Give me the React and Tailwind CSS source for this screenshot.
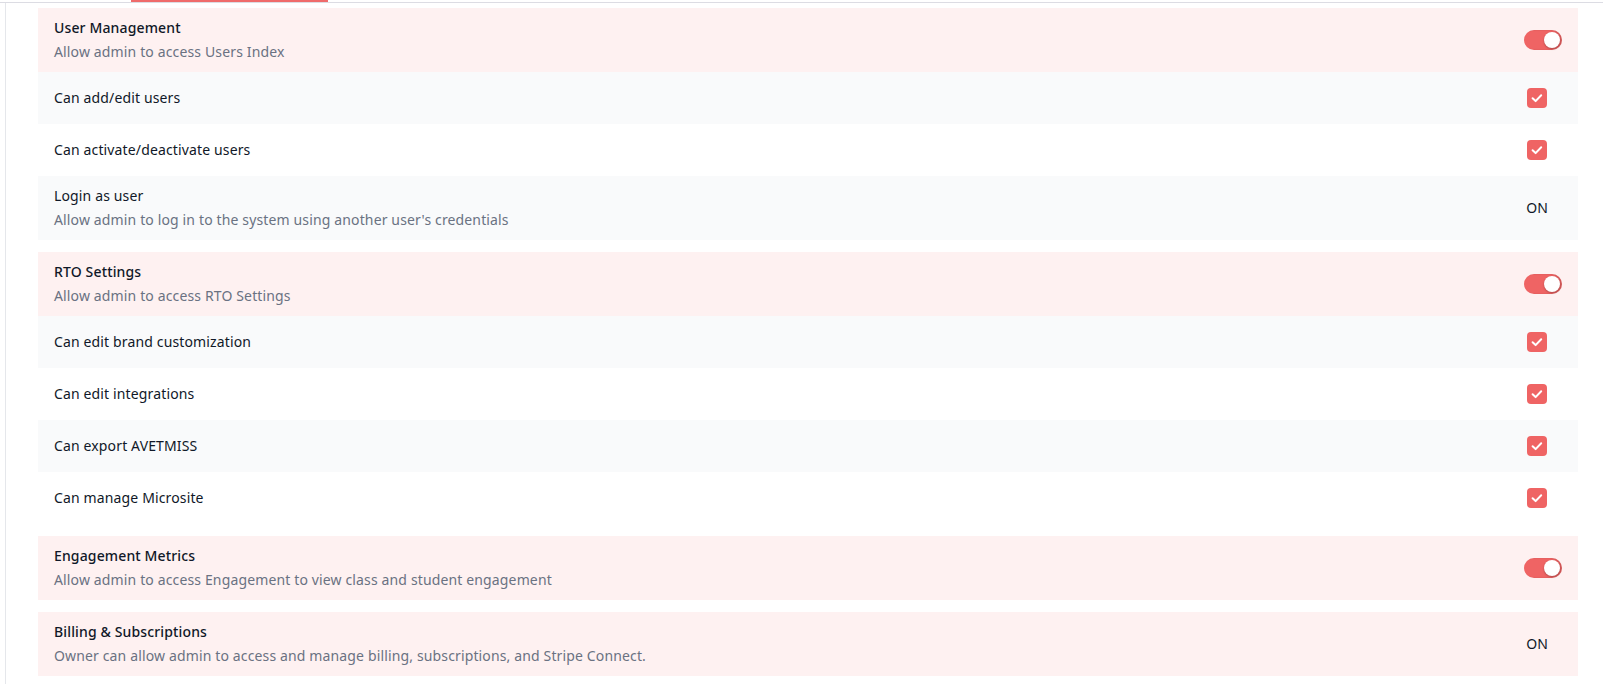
import React, { useState } from 'react';

const groups = [
  {
    title: 'User Management',
    desc: 'Allow admin to access Users Index',
    control: 'toggle',
    items: [
      { title: 'Can add/edit users', control: 'check' },
      { title: 'Can activate/deactivate users', control: 'check' },
      {
        title: 'Login as user',
        desc: "Allow admin to log in to the system using another user's credentials",
        control: 'on',
      },
    ],
  },
  {
    title: 'RTO Settings',
    desc: 'Allow admin to access RTO Settings',
    control: 'toggle',
    items: [
      { title: 'Can edit brand customization', control: 'check' },
      { title: 'Can edit integrations', control: 'check' },
      { title: 'Can export AVETMISS', control: 'check' },
      { title: 'Can manage Microsite', control: 'check' },
    ],
  },
  {
    title: 'Engagement Metrics',
    desc: 'Allow admin to access Engagement to view class and student engagement',
    control: 'toggle',
    items: [],
  },
  {
    title: 'Billing & Subscriptions',
    desc: 'Owner can allow admin to access and manage billing, subscriptions, and Stripe Connect.',
    control: 'on',
    items: [],
  },
];

function Toggle() {
  const [on, setOn] = useState(true);
  return (
    <button
      onClick={() => setOn((v) => !v)}
      className={`flex items-center w-[38px] h-5 rounded-full px-[2px] shadow-[inset_-2px_0_2px_rgba(0,0,0,0.12)] ${
        on ? 'bg-[#ef6464] justify-end' : 'bg-gray-300 justify-start'
      }`}
    >
      <span className="block h-4 w-4 rounded-full bg-white shadow-[0_1px_2px_rgba(0,0,0,0.25)]" />
    </button>
  );
}

function Check() {
  const [on, setOn] = useState(true);
  return (
    <button
      onClick={() => setOn((v) => !v)}
      className={`mr-[15px] flex h-5 w-5 items-center justify-center rounded-[4px] ${
        on ? 'bg-[#ef6464]' : 'bg-white border border-gray-300'
      }`}
    >
      {on && (
        <svg width="20" height="20" viewBox="0 0 20 20" fill="none">
          <path
            d="M5.6 10.3l3 2.8 5.6-5.9"
            stroke="white"
            strokeWidth="2"
            strokeLinecap="round"
            strokeLinejoin="round"
          />
        </svg>
      )}
    </button>
  );
}

function Control({ type }) {
  if (type === 'toggle') return <Toggle />;
  if (type === 'check') return <Check />;
  return <span className="mr-[14px] text-sm text-gray-900">ON</span>;
}

function Row({ title, desc, control, header, bg }) {
  return (
    <div className={`flex items-center justify-between pl-4 pr-4 ${bg} ${desc ? 'h-16' : 'h-[52px]'}`}>
      <div className="flex flex-col">
        <span className={`text-sm leading-6 text-gray-900 ${header ? 'font-medium' : ''}`}>{title}</span>
        {desc && <span className="text-sm leading-6 text-gray-500">{desc}</span>}
      </div>
      <Control type={control} />
    </div>
  );
}

export default function App() {
  return (
    <div className="min-h-[684px] bg-white font-['Noto_Sans',sans-serif] tracking-[0.14px]">
      {/* Tab bar (scrolled) */}
      <div className="border-b border-[#dcdce3]">
        <div className="ml-[131px] h-[2px] w-[197px] bg-[#ef6b6b]" />
      </div>

      <div className="ml-[5px] min-h-[681px] border-l border-[#e5e7eb] pl-8 pr-[25px] pt-[5px]">
        <div className="flex flex-col gap-3">
          {groups.map((g) => (
            <div key={g.title} className="flex flex-col">
              <Row title={g.title} desc={g.desc} control={g.control} header bg="bg-[#fef1f1]" />
              {g.items.map((it, i) => (
                <Row
                  key={it.title}
                  title={it.title}
                  desc={it.desc}
                  control={it.control}
                  bg={i % 2 === 0 ? 'bg-[#f9fafb]' : 'bg-white'}
                />
              ))}
            </div>
          ))}
        </div>
      </div>
    </div>
  );
}
